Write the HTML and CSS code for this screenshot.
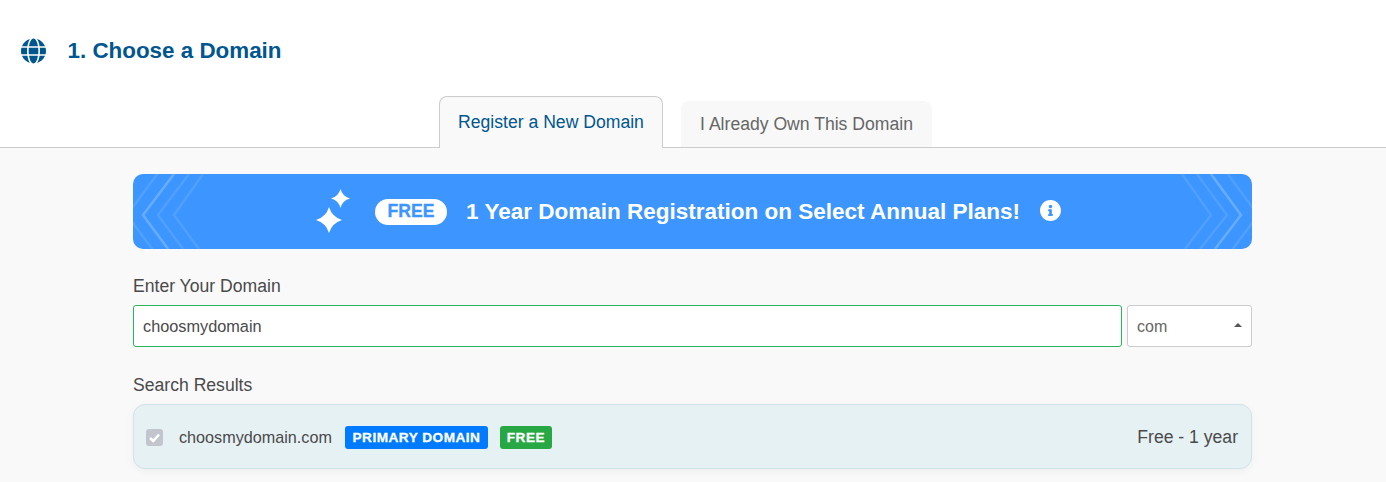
FILE: index.html
```html
<!DOCTYPE html>
<html lang="en">
<head>
<meta charset="utf-8">
<title>Choose a Domain</title>
<link rel="stylesheet" href="styles.css">
</head>
<body>
<header class="step-head">
  <svg class="globe" viewBox="0 0 496 512" aria-hidden="true"><path d="M336.5 160C322 70.7 287.8 8 248 8s-74 62.7-88.5 152h177zM152 256c0 22.2 1.2 43.5 3.3 64h185.3c2.1-20.5 3.3-41.8 3.3-64s-1.2-43.5-3.3-64H155.3c-2.1 20.5-3.3 41.8-3.3 64zm324.7-96c-28.6-67.9-86.5-120.4-158-141.6 24.4 33.8 41.2 84.7 50 141.6h108zM177.2 18.4C105.8 39.6 47.8 92.1 19.3 160h108c8.7-56.9 25.5-107.8 49.9-141.6zM487.4 192H372.7c2.1 21 3.3 42.5 3.3 64s-1.2 43-3.3 64h114.6c5.5-20.5 8.6-41.8 8.6-64s-3.1-43.5-8.5-64zM120 256c0-21.5 1.2-43 3.3-64H8.6C3.2 212.5 0 233.8 0 256s3.2 43.5 8.6 64h114.6c-2-21-3.2-42.5-3.2-64zm39.5 96c14.5 89.3 48.7 152 88.5 152s74-62.7 88.5-152h-177zm159.3 141.6c71.4-21.2 129.4-73.7 158-141.6h-108c-8.8 56.9-25.6 107.8-50 141.6zM19.3 352c28.6 67.9 86.5 120.4 158 141.6-24.4-33.8-41.2-84.7-50-141.6h-108z"/></svg>
  <h1 class="step-title">1. Choose a Domain</h1>
</header>
<nav class="tabs">
  <a class="tab tab-active">Register a New Domain</a>
  <a class="tab tab-idle">I Already Own This Domain</a>
</nav>
<main class="panel">
  <section class="banner">
    <svg class="chevrons chevrons-left" viewBox="0 0 120 75" aria-hidden="true">
      <path class="chev-bright" d="M41 0 10 41 35 75"/>
      <path class="chev-faint" d="M25 -1 -6 41 20 76"/>
      <path class="chev-faint" d="M56 0 25 41 50 75"/>
      <path class="chev-faint" d="M70 0 41 41 66 75"/>
    </svg>
    <svg class="chevrons chevrons-right" viewBox="0 0 120 75" aria-hidden="true">
      <path class="chev-bright" d="M41 0 11 41 37 75"/>
      <path class="chev-faint" d="M25 -1 -6 41 20 76"/>
      <path class="chev-faint" d="M55 0 25 41 52 75"/>
      <path class="chev-faint" d="M70 0 41 41 67 75"/>
    </svg>
    <svg class="sparkles" viewBox="0 0 36 47" aria-hidden="true">
      <path d="M25.500 1Q27.500 8.500 35 10.500 27.500 12.500 25.500 20 23.500 12.500 16 10.500 23.500 8.500 25.500 1Z"/>
      <path d="M14 19Q17 29 27 32 17 35 14 45 11 35 1 32 11 29 14 19Z"/>
    </svg>
    <span class="free-pill">FREE</span>
    <h2 class="banner-text">1 Year Domain Registration on Select Annual Plans!</h2>
    <svg class="info" viewBox="8 8 496 496" aria-hidden="true"><path d="M256 8C119.043 8 8 119.083 8 256c0 136.997 111.043 248 248 248s248-111.003 248-248C504 119.083 392.957 8 256 8zm0 110c23.196 0 42 18.804 42 42s-18.804 42-42 42-42-18.804-42-42 18.804-42 42-42zm56 254c0 6.627-5.373 12-12 12h-88c-6.627 0-12-5.373-12-12v-24c0-6.627 5.373-12 12-12h12v-64h-12c-6.627 0-12-5.373-12-12v-24c0-6.627 5.373-12 12-12h64c6.627 0 12 5.373 12 12v100h12c6.627 0 12 5.373 12 12v24z"/></svg>
  </section>

  <label class="field-label" for="domain">Enter Your Domain</label>
  <div class="domain-row">
    <input class="domain-input" id="domain" type="text" value="choosmydomain">
    <div class="tld-select"><span>com</span><i class="caret"></i></div>
  </div>

  <h3 class="results-label">Search Results</h3>
  <div class="result">
    <span class="check"><svg viewBox="0 0 17 17" aria-hidden="true"><path d="M4 9 7.300 12 13 5.500"/></svg></span>
    <span class="result-name">choosmydomain.com</span>
    <span class="badge badge-blue">PRIMARY DOMAIN</span>
    <span class="badge badge-green">FREE</span>
    <span class="result-price">Free - 1 year</span>
  </div>
</main>
</body>
</html>
```

FILE: styles.css
```css
* { box-sizing: border-box; }
html, body { margin: 0; height: 100%; }
body {
  background: #fff;
  color: #4a4a4a;
  font-family: "Liberation Sans", Arial, sans-serif;
  overflow: hidden;
}
.step-head {
  height: 96px;
  display: flex;
  align-items: center;
  padding: 5px 0 0 21px;
}
.globe { width: 25px; height: 26px; fill: #00568f; flex: none; }
.step-title {
  margin: 0 0 0 21.500px;
  font-size: 22.400px;
  font-weight: 700;
  color: #00568f;
}
.tabs {
  display: flex;
  align-items: flex-end;
  height: 52px;
  padding-left: 439px;
  gap: 18px;
  border-bottom: 1px solid #ccc;
}
.tab { display: block; font-size: 17.600px; text-align: center; }
.tab-active {
  width: 224px;
  height: 52px;
  margin-bottom: -1px;
  padding-top: 15px;
  background: #f9f9f9;
  border: 1px solid #ccc;
  border-bottom: 0;
  border-radius: 8px 8px 0 0;
  color: #00568f;
}
.tab-idle {
  width: 251px;
  height: 46px;
  padding-top: 13px;
  background: #f8f8f8;
  border-radius: 8px 8px 0 0;
  color: #666;
}
.panel {
  background: #f9f9f9;
  height: 334px;
  padding: 26px 134px 0 133px;
}
.banner {
  position: relative;
  height: 75px;
  display: flex;
  align-items: center;
  justify-content: center;
  padding-right: 9px;
  background: #3d96ff;
  border-radius: 10px;
  overflow: hidden;
  color: #fff;
}
.chevrons { position: absolute; top: 0; width: 120px; height: 75px; fill: none; }
.chevrons-left { left: 0; }
.chevrons-right { right: 0; transform: scaleX(-1); }
.chev-bright { stroke: #fff; stroke-opacity: .22; stroke-width: 2.500; }
.chev-faint { stroke: #fff; stroke-opacity: .1; stroke-width: 2.500; }
.sparkles { width: 36px; height: 47px; fill: #fff; flex: none; margin-right: 24px; }
.free-pill {
  width: 72px;
  height: 26px;
  display: flex;
  align-items: center;
  justify-content: center;
  background: #fff;
  border-radius: 13px;
  color: #3d96ff;
  font-size: 17.600px;
  font-weight: 700;
  -webkit-text-stroke: .3px #3d96ff;
  flex: none;
}
.banner-text {
  margin: 0 20px 0 19px;
  font-size: 22.500px;
  font-weight: 700;
  white-space: nowrap;
}
.info { width: 21px; height: 21px; fill: #fff; flex: none; margin-bottom: 2px; }
.field-label {
  display: block;
  margin-top: 28px;
  font-size: 17.600px;
  line-height: 19px;
}
.domain-row { display: flex; gap: 5px; margin-top: 9px; }
.domain-input {
  flex: 1;
  min-width: 0;
  height: 42px;
  padding: 1px 9px 0;
  border: 1px solid #28b463;
  border-radius: 3px;
  background: #fff;
  color: #4a4a4a;
  font: 16.300px "Liberation Sans", Arial, sans-serif;
  outline: 0;
}
.tld-select {
  width: 125px;
  height: 42px;
  display: flex;
  align-items: center;
  justify-content: space-between;
  padding: 1px 9px 0;
  background: #fff;
  border: 1px solid #ccc;
  border-radius: 3px;
  color: #666;
  font-size: 16px;
}
.caret {
  width: 0;
  height: 0;
  margin-bottom: 3px;
  border: 4px solid transparent;
  border-top: 0;
  border-bottom-color: #555;
}
.results-label {
  margin: 29px 0 0;
  font-size: 17.600px;
  font-weight: 400;
  line-height: 19px;
}
.result {
  height: 65px;
  margin-top: 9px;
  display: flex;
  align-items: center;
  padding: 2px 13px 0 12px;
  background: #e6f1f4;
  border: 1px solid #d0e3e9;
  border-radius: 12px;
  box-shadow: 0 2px 8px rgba(0, 0, 0, .05);
}
.check {
  width: 17px;
  height: 17px;
  background: #c3c5cd;
  border-radius: 3px;
  flex: none;
}
.check svg { display: block; width: 17px; height: 17px; fill: none; stroke: #fff; stroke-width: 2.500; }
.result-name { margin-left: 16px; font-size: 16.200px; }
.badge {
  height: 23px;
  display: flex;
  align-items: center;
  justify-content: center;
  border-radius: 3px;
  color: #fff;
  font-size: 13.600px;
  font-weight: 700;
  letter-spacing: .5px;
  -webkit-text-stroke: .3px #fff;
}
.badge-blue { width: 143px; margin-left: 13px; background: #007bff; }
.badge-green { width: 52px; margin-left: 12px; background: #28a745; }
.result-price { margin-left: auto; font-size: 17.600px; }
```
